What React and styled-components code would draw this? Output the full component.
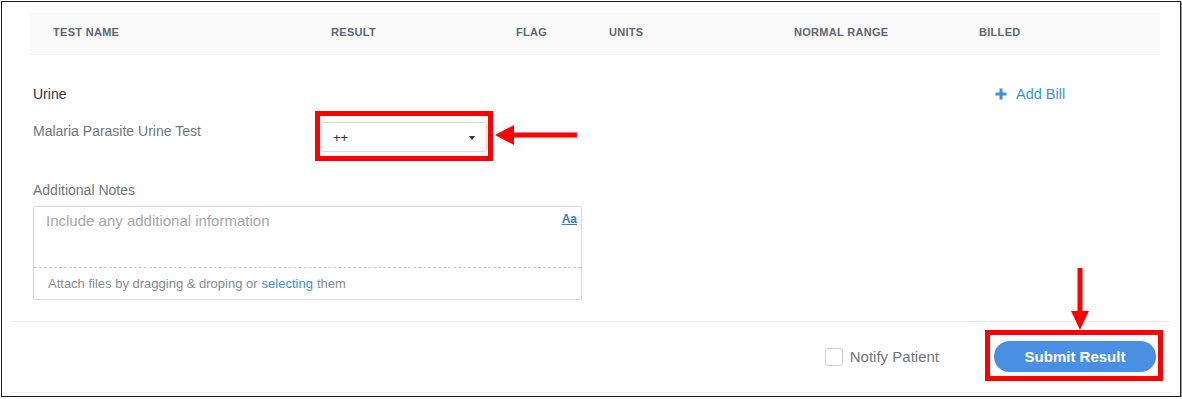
import React from 'react'
import styled, { createGlobalStyle } from 'styled-components';

const GlobalStyle = createGlobalStyle`
    * { box-sizing: border-box; }
    body {
        margin: 0;
        background: #fff;
        font-family: "Liberation Sans", Arial, sans-serif;
    }
`;

const columns = ["Test Name", "Result", "Flag", "Units", "Normal Range", "Billed"];

const App = () => {
  return (
    <>
      <GlobalStyle />
      <Frame>
        <Main>
          <HeaderRow>
            {columns.map((c) => (
              <HeaderCell key={c}>{c}</HeaderCell>
            ))}
          </HeaderRow>

          <Body>
            <TestGrid>
              <GroupName>Urine</GroupName>
              <span />
              <AddBill>
                <svg width="12" height="12" viewBox="0 0 12 12">
                  <path d="M6 0.5v11M0.5 6h11" stroke="#3b8fe0" strokeWidth="3" />
                </svg>
                Add Bill
              </AddBill>

              <TestName>Malaria Parasite Urine Test</TestName>
              <Highlight $inset="-11px -6px -9px -6px">
                <Select>
                  <span>++</span>
                  <Caret />
                </Select>
                <LeftArrow width="82" height="22" viewBox="0 0 82 22">
                  <polygon points="0,11 19,1 19,21" fill="#f00" />
                  <rect x="17" y="8.5" width="65" height="5" fill="#f00" />
                </LeftArrow>
              </Highlight>
            </TestGrid>

            <NotesLabel>Additional Notes</NotesLabel>
            <NotesBox>
              <NotesInput>
                Include any additional information
                <FormatToggle>Aa</FormatToggle>
              </NotesInput>
              <Attach>
                Attach files by dragging &amp; droping or <a>selecting</a> them
              </Attach>
            </NotesBox>
          </Body>
        </Main>

        <Footer>
          <Notify>
            <Checkbox />
            Notify Patient
          </Notify>
          <Highlight $inset="-11px -7px -9px -9px">
            <SubmitButton>Submit Result</SubmitButton>
            <DownArrow width="20" height="62" viewBox="0 0 20 62">
              <rect x="7.5" y="0" width="5" height="46" fill="#f00" />
              <polygon points="1,43 19,43 10,62" fill="#f00" />
            </DownArrow>
          </Highlight>
        </Footer>
      </Frame>
    </>
  )
}

export default App;

const Frame = styled.div`
    position: relative;
    margin: 1px 0 0 1px;
    width: 1180px;
    height: 396px;
    border: 1px solid #1e1e1e;
    box-shadow: 1px 1px 1px #9a9a9a;
    display: flex;
    flex-direction: column;
`;

const Main = styled.div`
    padding: 11px 20px 0 28px;
`;

const HeaderRow = styled.div`
    display: grid;
    grid-template-columns: 278px 185px 93px 185px 185px 1fr;
    align-items: center;
    height: 42px;
    padding: 0 0 3px 23px;
    background: #f9f9f9;
    border-bottom: 1px solid #f1f1f1;
`;

const HeaderCell = styled.div`
    font-size: 11px;
    font-weight: 700;
    letter-spacing: 0.3px;
    text-transform: uppercase;
    color: #5d6874;
`;

const Body = styled.div`
    padding: 31px 0 0 3px;
`;

const TestGrid = styled.div`
    display: grid;
    grid-template-columns: 288px 674px 1fr;
    row-gap: 20px;
    align-items: start;
`;

const GroupName = styled.div`
    font-size: 14px;
    line-height: 16px;
    color: #333;
`;

const AddBill = styled.div`
    display: flex;
    align-items: center;
    gap: 9px;
    font-size: 14.5px;
    line-height: 16px;
    color: #3b8fe0;
    cursor: pointer;
`;

const TestName = styled.div`
    padding-top: 1px;
    font-size: 14px;
    line-height: 16px;
    color: #6f7780;
`;

const Highlight = styled.div`
    position: relative;
    width: fit-content;

    &::after {
        content: "";
        position: absolute;
        inset: ${props => props.$inset};
        border: 5px solid #f00;
        pointer-events: none;
    }
`;

const Select = styled.div`
    display: flex;
    align-items: center;
    justify-content: space-between;
    width: 166px;
    height: 30px;
    padding: 0 11px 0 11px;
    border: 1px solid #dcdcdc;
    border-radius: 2px;
    background: #fff;
    font-size: 13px;
    color: #333;
`;

const Caret = styled.span`
    width: 0;
    height: 0;
    margin-top: 2px;
    border-left: 3.5px solid transparent;
    border-right: 3.5px solid transparent;
    border-top: 4px solid #333;
`;

const LeftArrow = styled.svg`
    position: absolute;
    left: calc(100% + 8px);
    top: 2px;
`;

const NotesLabel = styled.div`
    margin-top: 30px;
    font-size: 14px;
    line-height: 16px;
    color: #6f7780;
`;

const NotesBox = styled.div`
    margin-top: 8px;
    width: 549px;
    border: 1px solid #dcdcdc;
    border-radius: 2px;
`;

const NotesInput = styled.div`
    position: relative;
    height: 61px;
    padding: 5px 12px;
    font-size: 15px;
    line-height: 18px;
    color: #a3a7ab;
    border-bottom: 1px dashed #cfcfcf;
`;

const FormatToggle = styled.span`
    position: absolute;
    top: 3px;
    right: 4px;
    font-size: 12px;
    font-weight: 700;
    color: #2f7fd6;
    text-decoration: underline;
`;

const Attach = styled.div`
    height: 31px;
    display: flex;
    align-items: center;
    padding-left: 14px;
    font-size: 13px;
    color: #878c91;

    a {
        color: #3b8fe0;
        margin: 0 4px;
    }
`;

const Footer = styled.div`
    margin: 21px 9px 0 9px;
    height: 72px;
    display: flex;
    align-items: center;
    justify-content: flex-end;
    gap: 55px;
    padding: 0 15px 1px 0;
    border-top: 1px solid #eeeeee;
    border-bottom: 1px solid #f2f2f2;
`;

const Notify = styled.label`
    display: flex;
    align-items: center;
    gap: 7px;
    font-size: 15px;
    color: #6f7780;
`;

const Checkbox = styled.span`
    width: 18px;
    height: 18px;
    border: 1px solid #cfcfcf;
    border-radius: 3px;
    background: #fff;
`;

const SubmitButton = styled.button`
    width: 162px;
    height: 31px;
    border: none;
    border-radius: 16px;
    background: #4a90e2;
    color: #fff;
    font-family: "Liberation Sans", Arial, sans-serif;
    font-size: 15px;
    font-weight: 700;
    cursor: pointer;
`;

const DownArrow = styled.svg`
    position: absolute;
    left: 76px;
    bottom: calc(100% + 11px);
`;
